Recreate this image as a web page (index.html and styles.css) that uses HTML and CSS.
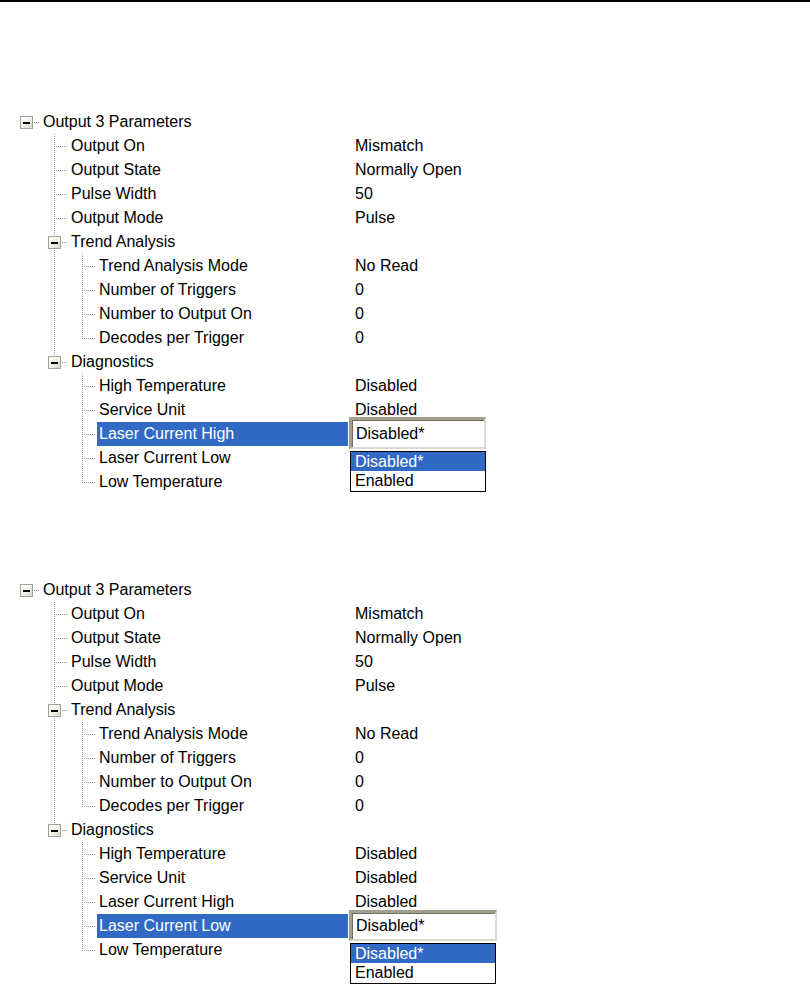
FILE: index.html
```html
<!DOCTYPE html>
<html>
<head>
<meta charset="utf-8">
<link rel="stylesheet" href="styles.css">
</head>
<body>
<div class="rule"></div>
<div class="page">
  <div class="tree">
    <div class="row"><span class="cell root"><span class="box"></span></span><span class="label">Output 3 Parameters</span><span class="value"></span></div>
    <div class="row"><span class="cell"></span><span class="cell tee"></span><span class="label">Output On</span><span class="value">Mismatch</span></div>
    <div class="row"><span class="cell"></span><span class="cell tee"></span><span class="label">Output State</span><span class="value">Normally Open</span></div>
    <div class="row"><span class="cell"></span><span class="cell tee"></span><span class="label">Pulse Width</span><span class="value">50</span></div>
    <div class="row"><span class="cell"></span><span class="cell tee"></span><span class="label">Output Mode</span><span class="value">Pulse</span></div>
    <div class="row"><span class="cell"></span><span class="cell tee"><span class="box"></span></span><span class="label">Trend Analysis</span><span class="value"></span></div>
    <div class="row"><span class="cell"></span><span class="cell guide"></span><span class="cell tee"></span><span class="label">Trend Analysis Mode</span><span class="value">No Read</span></div>
    <div class="row"><span class="cell"></span><span class="cell guide"></span><span class="cell tee"></span><span class="label">Number of Triggers</span><span class="value">0</span></div>
    <div class="row"><span class="cell"></span><span class="cell guide"></span><span class="cell tee"></span><span class="label">Number to Output On</span><span class="value">0</span></div>
    <div class="row"><span class="cell"></span><span class="cell guide"></span><span class="cell elbow"></span><span class="label">Decodes per Trigger</span><span class="value">0</span></div>
    <div class="row"><span class="cell"></span><span class="cell elbow"><span class="box"></span></span><span class="label">Diagnostics</span><span class="value"></span></div>
    <div class="row"><span class="cell"></span><span class="cell"></span><span class="cell tee"></span><span class="label">High Temperature</span><span class="value">Disabled</span></div>
    <div class="row"><span class="cell"></span><span class="cell"></span><span class="cell tee"></span><span class="label">Service Unit</span><span class="value">Disabled</span></div>
    <div class="row sel"><span class="cell"></span><span class="cell"></span><span class="cell tee"></span><span class="label">Laser Current High</span>
      <span class="value has-combo">
        <span class="combo combo-a">Disabled*</span>
        <span class="dropdown dropdown-a"><span class="opt hl">Disabled*</span><span class="opt">Enabled</span></span>
      </span>
    </div>
    <div class="row"><span class="cell"></span><span class="cell"></span><span class="cell tee"></span><span class="label">Laser Current Low</span><span class="value"></span></div>
    <div class="row"><span class="cell"></span><span class="cell"></span><span class="cell elbow"></span><span class="label">Low Temperature</span><span class="value"></span></div>
  </div>

  <div class="tree">
    <div class="row"><span class="cell root"><span class="box"></span></span><span class="label">Output 3 Parameters</span><span class="value"></span></div>
    <div class="row"><span class="cell"></span><span class="cell tee"></span><span class="label">Output On</span><span class="value">Mismatch</span></div>
    <div class="row"><span class="cell"></span><span class="cell tee"></span><span class="label">Output State</span><span class="value">Normally Open</span></div>
    <div class="row"><span class="cell"></span><span class="cell tee"></span><span class="label">Pulse Width</span><span class="value">50</span></div>
    <div class="row"><span class="cell"></span><span class="cell tee"></span><span class="label">Output Mode</span><span class="value">Pulse</span></div>
    <div class="row"><span class="cell"></span><span class="cell tee"><span class="box"></span></span><span class="label">Trend Analysis</span><span class="value"></span></div>
    <div class="row"><span class="cell"></span><span class="cell guide"></span><span class="cell tee"></span><span class="label">Trend Analysis Mode</span><span class="value">No Read</span></div>
    <div class="row"><span class="cell"></span><span class="cell guide"></span><span class="cell tee"></span><span class="label">Number of Triggers</span><span class="value">0</span></div>
    <div class="row"><span class="cell"></span><span class="cell guide"></span><span class="cell tee"></span><span class="label">Number to Output On</span><span class="value">0</span></div>
    <div class="row"><span class="cell"></span><span class="cell guide"></span><span class="cell elbow"></span><span class="label">Decodes per Trigger</span><span class="value">0</span></div>
    <div class="row"><span class="cell"></span><span class="cell elbow"><span class="box"></span></span><span class="label">Diagnostics</span><span class="value"></span></div>
    <div class="row"><span class="cell"></span><span class="cell"></span><span class="cell tee"></span><span class="label">High Temperature</span><span class="value">Disabled</span></div>
    <div class="row"><span class="cell"></span><span class="cell"></span><span class="cell tee"></span><span class="label">Service Unit</span><span class="value">Disabled</span></div>
    <div class="row"><span class="cell"></span><span class="cell"></span><span class="cell tee"></span><span class="label">Laser Current High</span><span class="value">Disabled</span></div>
    <div class="row sel"><span class="cell"></span><span class="cell"></span><span class="cell tee"></span><span class="label">Laser Current Low</span>
      <span class="value has-combo">
        <span class="combo combo-b">Disabled*</span>
        <span class="dropdown dropdown-b"><span class="opt hl">Disabled*</span><span class="opt">Enabled</span></span>
      </span>
    </div>
    <div class="row"><span class="cell"></span><span class="cell"></span><span class="cell elbow"></span><span class="label">Low Temperature</span><span class="value"></span></div>
  </div>
</div>
</body>
</html>
```
FILE: styles.css
```css
* { box-sizing: border-box; }
html, body { margin: 0; padding: 0; background: #fff; }
body {
  font-family: "Liberation Sans", Arial, sans-serif;
  font-size: 16px;
  color: #000;
  width: 810px;
  height: 987px;
  overflow: hidden;
}
.rule { height: 2px; background: #000; }
.page { padding-top: 108px; padding-left: 12px; }
.tree { width: 488px; display: flex; flex-direction: column; }
.tree + .tree { margin-top: 84px; }

.row { display: flex; height: 24px; line-height: 24px; }
.cell {
  width: 28px; flex: none; height: 24px;
  display: flex; align-items: center;
  background-repeat: no-repeat;
}
.tee {
  background-image:
    repeating-linear-gradient(to bottom, #9a9a9a 0 1px, transparent 1px 2px),
    repeating-linear-gradient(to right, #9a9a9a 0 1px, transparent 1px 2px);
  background-position: 14px 0, 16px 12px;
  background-size: 1px 24px, 12px 1px;
}
.elbow {
  background-image:
    repeating-linear-gradient(to bottom, #9a9a9a 0 1px, transparent 1px 2px),
    repeating-linear-gradient(to right, #9a9a9a 0 1px, transparent 1px 2px);
  background-position: 14px 0, 16px 12px;
  background-size: 1px 13px, 12px 1px;
}
.guide {
  background-image: repeating-linear-gradient(to bottom, #9a9a9a 0 1px, transparent 1px 2px);
  background-position: 14px 0;
  background-size: 1px 24px;
}
.root {
  background-image: repeating-linear-gradient(to right, #9a9a9a 0 1px, transparent 1px 2px);
  background-position: 16px 12px;
  background-size: 12px 1px;
}
.box {
  width: 13px; height: 13px; margin-left: 8px; margin-top: 1px;
  border: 1px solid #a4a293;
  background: linear-gradient(135deg, #ffffff 0%, #f2f1ec 50%, #d9d7cc 100%);
  display: flex; align-items: center; justify-content: center;
}
.box::before { content: ""; width: 7px; height: 2px; background: #000; }

.label {
  flex: 1; margin-left: 1px; padding-left: 2px;
  white-space: nowrap;
}
.sel .label { background: #316ac5; color: #fff; }
.value {
  width: 152px; flex: none; padding-left: 7px; white-space: nowrap;
}
.value.has-combo { padding-left: 1px; position: relative; }

.combo {
  display: flex; align-items: center;
  height: 32px; margin-top: -5px;
  padding-left: 4px;
  background: #fff;
  border-style: solid;
  border-width: 3px 2px 2px 3px;
  border-color: #a29e8f #dcd9cf #dcd9cf #a29e8f;
  box-shadow: inset 1px 1px 0 #716e63;
}
.combo-a { width: 137px; }
.combo-b { width: 148px; height: 31px; margin-top: -4px; }

.dropdown {
  position: absolute; left: 2px; top: 29px;
  border: 1px solid #000; background: #fff;
  display: flex; flex-direction: column;
}
.dropdown-a { width: 136px; }
.dropdown-b { width: 146px; }
.opt { height: 20px; line-height: 20px; padding-left: 4px; }
.opt.hl { height: 19px; line-height: 19px; background: #316ac5; color: #fff; }
```
